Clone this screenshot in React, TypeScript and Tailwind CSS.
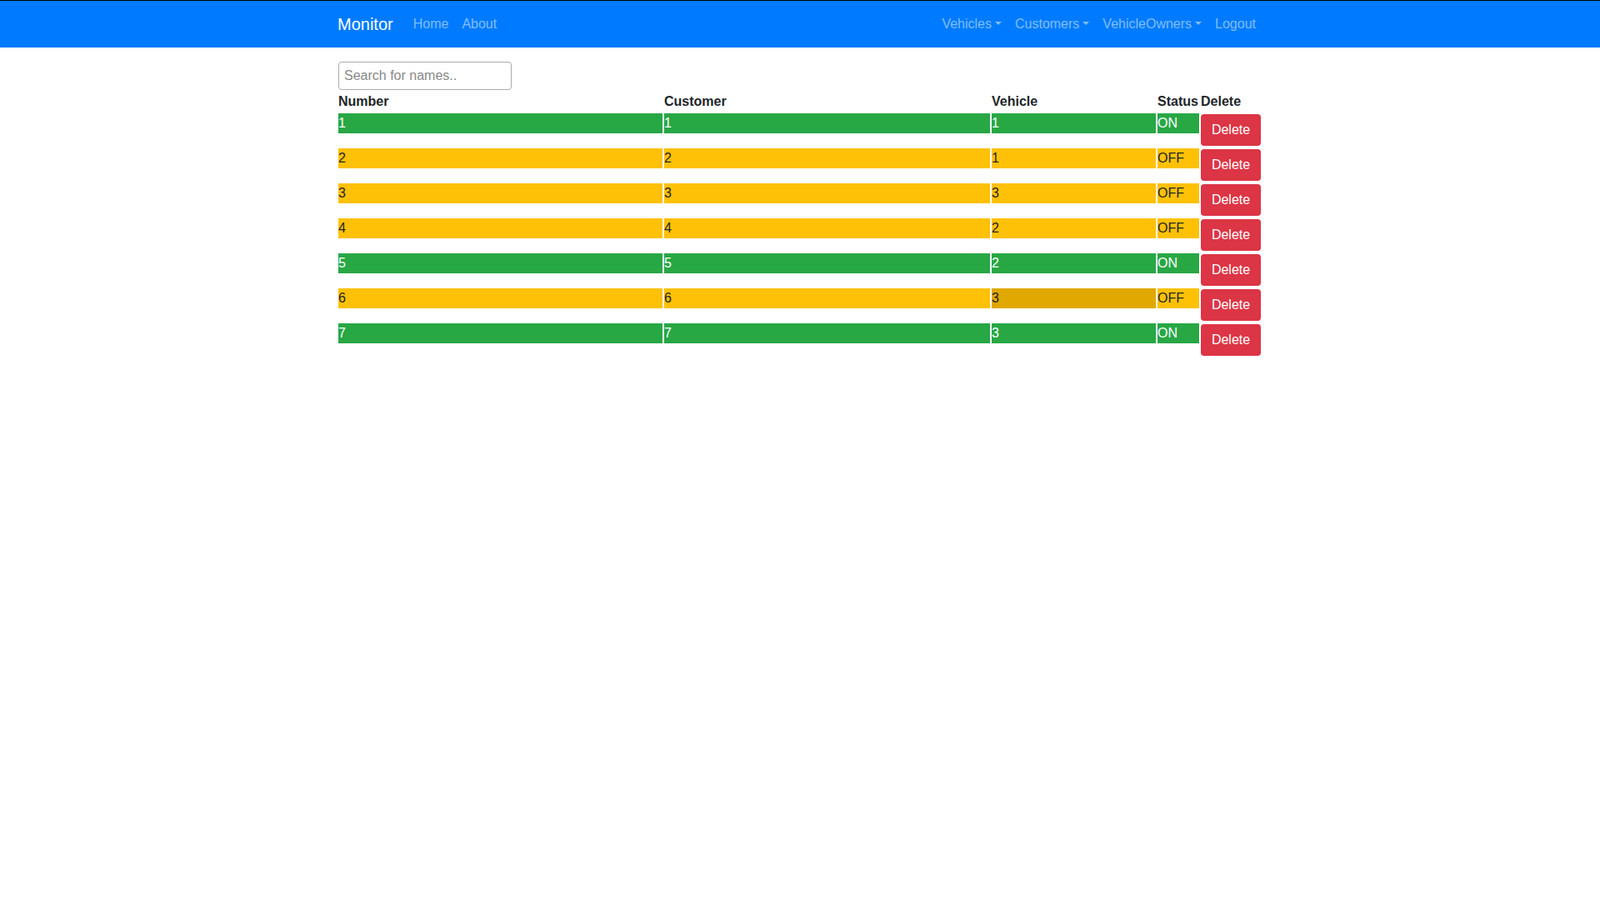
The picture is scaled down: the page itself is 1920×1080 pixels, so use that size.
import React from "react";

type Row = { id: number; customer: number; vehicle: number; on: boolean };

const rows: Row[] = [
  { id: 1, customer: 1, vehicle: 1, on: true },
  { id: 2, customer: 2, vehicle: 1, on: false },
  { id: 3, customer: 3, vehicle: 3, on: false },
  { id: 4, customer: 4, vehicle: 2, on: false },
  { id: 5, customer: 5, vehicle: 2, on: true },
  { id: 6, customer: 6, vehicle: 3, on: false },
  { id: 7, customer: 7, vehicle: 3, on: true },
];

function Caret() {
  return (
    <span className="ml-[4px] inline-block align-[4px] border-x-[4px] border-t-[4px] border-x-transparent border-t-current" />
  );
}

function NavLink({ children, dropdown }: { children: React.ReactNode; dropdown?: boolean }) {
  return (
    <a href="#" className="px-2 py-2 text-white/50 hover:text-white/75">
      {children}
      {dropdown && <Caret />}
    </a>
  );
}

function Cell({ on, hover, children }: { on: boolean; hover?: boolean; children: React.ReactNode }) {
  // green rows are ON, yellow rows OFF; the hovered cell gets the darker warning tone
  const cls = on
    ? "bg-[#28a745] text-white"
    : hover
      ? "bg-[#e0a800] text-[#212529]"
      : "bg-[#ffc107] text-[#212529]";
  return (
    <td className="p-0 align-top">
      <div className={`h-6 leading-6 ${cls}`}>{children}</div>
    </td>
  );
}

export default function App() {
  return (
    <div className="min-h-screen bg-white text-[16px] text-[#212529] font-['Liberation_Sans',Arial,sans-serif]">
      <nav className="border-t border-black bg-[#007bff]">
        <div className="mx-auto flex h-14 w-[1140px] items-center px-[15px]">
          <a href="#" className="mr-4 py-[5px] text-[20px] leading-[30px] text-white">
            Monitor
          </a>
          <div className="flex">
            <NavLink>Home</NavLink>
            <NavLink>About</NavLink>
          </div>
          <div className="ml-auto flex">
            <NavLink dropdown>Vehicles</NavLink>
            <NavLink dropdown>Customers</NavLink>
            <NavLink dropdown>VehicleOwners</NavLink>
            <NavLink>Logout</NavLink>
          </div>
        </div>
      </nav>

      <main className="mx-auto w-[1140px] px-[15px] pt-[17px]">
        <input
          type="text"
          placeholder="Search for names.."
          className="ml-px h-[34px] w-[208px] rounded-[4px] border border-[#aaa] px-[6px] text-[16px] text-[#495057] placeholder:text-[#888] outline-none"
        />
        <table className="-ml-px w-[1111px] border-separate border-spacing-[2px]">
          <thead>
            <tr className="text-left">
              <th className="w-[389px] p-0 leading-6 font-bold">Number</th>
              <th className="w-[391px] p-0 leading-6 font-bold">Customer</th>
              <th className="w-[197px] p-0 leading-6 font-bold">Vehicle</th>
              <th className="w-[50px] p-0 leading-6 font-bold">Status</th>
              <th className="w-[72px] p-0 leading-6 font-bold">Delete</th>
            </tr>
          </thead>
          <tbody>
            {rows.map((r) => (
              <tr key={r.id}>
                <Cell on={r.on}>{r.id}</Cell>
                <Cell on={r.on}>{r.customer}</Cell>
                <Cell on={r.on} hover={r.id === 6}>
                  {r.vehicle}
                </Cell>
                <Cell on={r.on}>{r.on ? "ON" : "OFF"}</Cell>
                <td className="p-0 align-top">
                  <button className="my-px h-[38px] w-[72px] rounded-[4px] bg-[#dc3545] leading-6 text-white">
                    Delete
                  </button>
                </td>
              </tr>
            ))}
          </tbody>
        </table>
      </main>
    </div>
  );
}
